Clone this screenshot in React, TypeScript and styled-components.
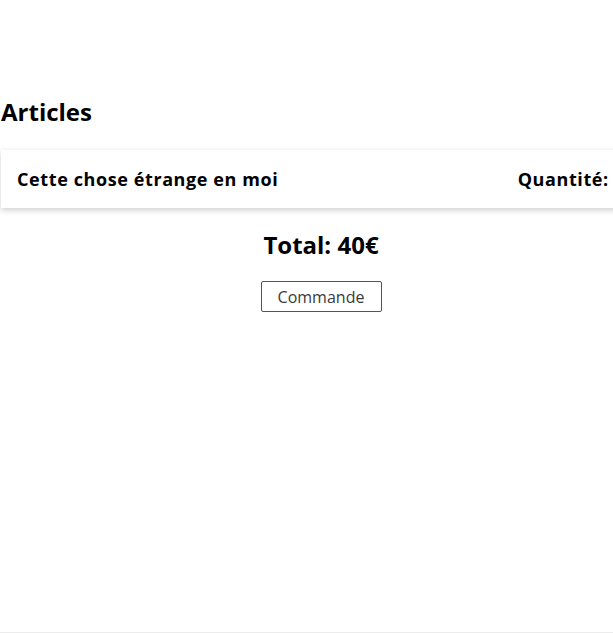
import React from "react";
import styled, { createGlobalStyle } from "styled-components";

const Global = createGlobalStyle`
  html, body { margin: 0; padding: 0; background: #fff; overflow: hidden; }
  body { font-family: "Open Sans", sans-serif; color: #000; }
`;

const Page = styled.div`
  height: 632px;
  border-bottom: 1px solid #ececec;
  overflow: hidden;
`;

const Container = styled.main`
  width: 640px;
  padding: 90px 0 0 1px;
  display: flex;
  flex-direction: column;
`;

const Title = styled.h2`
  margin: 0 0 16px;
  font-size: 24px;
  font-weight: 700;
  line-height: 44px;
`;

const Card = styled.div`
  display: flex;
  justify-content: space-between;
  align-items: center;
  height: 58px;
  padding: 0 16px;
  background: #fff;
  box-shadow: 0 2px 6px rgba(0, 0, 0, 0.2);
  font-size: 18px;
  font-weight: 700;
  letter-spacing: 0.6px;
`;

const Total = styled.h2`
  margin: 21px 0 20px;
  text-align: center;
  font-size: 24px;
  font-weight: 700;
  line-height: 32px;
`;

const ButtonRow = styled.div`
  display: flex;
  justify-content: center;
`;

const Button = styled.button`
  font-family: "Open Sans", sans-serif;
  font-size: 16px;
  color: #3a3a3a;
  background: #fff;
  border: 1px solid #117070;
  border-radius: 2px;
  width: 121px;
  height: 31px;
  padding: 0;
  cursor: pointer;
`;

export default function App() {
  return (
    <Page>
      <Global />
      <Container>
        <Title>Articles</Title>
        <Card>
          <span>Cette chose étrange en moi</span>
          <span>Quantité: 1</span>
        </Card>
        <Total>Total: 40€</Total>
        <ButtonRow>
          <Button>Commande</Button>
        </ButtonRow>
      </Container>
    </Page>
  );
}
